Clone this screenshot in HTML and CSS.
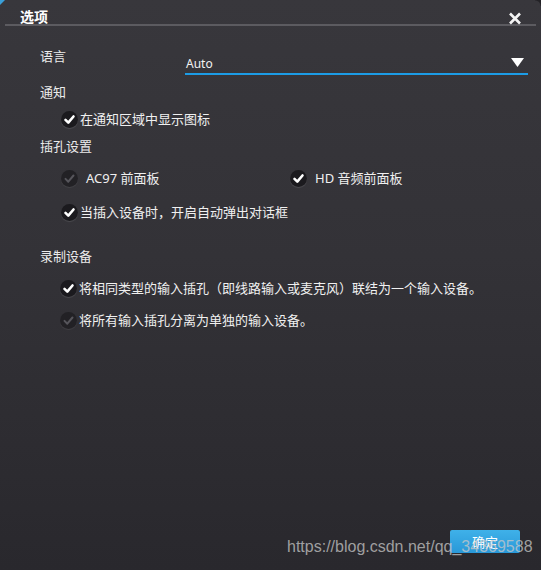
FILE: index.html
```html
<!DOCTYPE html>
<html lang="zh-CN">
<head>
<meta charset="utf-8">
<title>选项</title>
<link rel="stylesheet" href="styles.css">
</head>
<body>
<div class="dialog">
  <header class="titlebar">
    <span class="title">选项</span>
    <svg class="close" width="14" height="13" viewBox="0 0 14 13"><path d="M2 1.5 L12 11.5 M12 1.5 L2 11.5" stroke="#f4f4f4" stroke-width="2.6" fill="none"/></svg>
  </header>
  <main class="content">
    <div class="lang-row">
      <span class="label lang-label">语言</span>
      <div class="select">
        <span class="select-value">Auto</span>
        <svg class="caret" width="13" height="9" viewBox="0 0 13 9"><path d="M0 0 H13 L6.5 9 Z" fill="#ffffff"/></svg>
      </div>
    </div>

    <div class="label sec-notify">通知</div>
    <div class="opt opt-notify">
      <span class="chk on"><svg viewBox="0 0 17 17"><path d="M4.5 8.9 L7.3 11.7 L12.5 5.5"/></svg></span>
      <span class="opt-text">在通知区域中显示图标</span>
    </div>

    <div class="label sec-jack">插孔设置</div>
    <div class="jack-row">
      <div class="opt">
        <span class="chk off"><svg viewBox="0 0 17 17"><path d="M4.5 8.9 L7.3 11.7 L12.5 5.5"/></svg></span>
        <span class="opt-text spaced">AC97 前面板</span>
      </div>
      <div class="opt">
        <span class="chk on"><svg viewBox="0 0 17 17"><path d="M4.5 8.9 L7.3 11.7 L12.5 5.5"/></svg></span>
        <span class="opt-text spaced">HD 音频前面板</span>
      </div>
    </div>
    <div class="opt opt-popup">
      <span class="chk on"><svg viewBox="0 0 17 17"><path d="M4.5 8.9 L7.3 11.7 L12.5 5.5"/></svg></span>
      <span class="opt-text">当插入设备时，开启自动弹出对话框</span>
    </div>

    <div class="label sec-rec">录制设备</div>
    <div class="opt opt-rec1">
      <span class="chk on"><svg viewBox="0 0 17 17"><path d="M4.5 8.9 L7.3 11.7 L12.5 5.5"/></svg></span>
      <span class="opt-text">将相同类型的输入插孔（即线路输入或麦克风）联结为一个输入设备。</span>
    </div>
    <div class="opt opt-rec2">
      <span class="chk off"><svg viewBox="0 0 17 17"><path d="M4.5 8.9 L7.3 11.7 L12.5 5.5"/></svg></span>
      <span class="opt-text">将所有输入插孔分离为单独的输入设备。</span>
    </div>
  </main>
  <footer class="footer">
    <button class="ok">确定</button>
  </footer>
  <div class="watermark">https://blog.csdn.net/qq_34369588</div>
</div>
</body>
</html>
```

FILE: styles.css
```css
html, body {
  margin: 0;
  padding: 0;
  background: #2a292e;
}

.dialog {
  position: relative;
  width: 541px;
  height: 570px;
  display: flex;
  flex-direction: column;
  background: linear-gradient(to bottom, #38373c 0%, #333237 45%, #29282d 100%);
  font-family: "Noto Sans", "Noto Sans CJK SC", sans-serif;
  color: #ececec;
  overflow: hidden;
}

.dialog::before {
  content: "";
  position: absolute;
  left: 0;
  top: 0;
  width: 0;
  height: 0;
  border-top: 5px solid #3a9fd8;
  border-right: 5px solid transparent;
}

.dialog::after {
  content: "";
  position: absolute;
  right: 0;
  top: 0;
  width: 6px;
  height: 6px;
  background: radial-gradient(circle at 0 100%, transparent 5px, #232226 6px);
}

.titlebar {
  display: flex;
  justify-content: space-between;
  align-items: flex-start;
  height: 24px;
  margin: 0 5px;
  padding: 0 14px 0 15px;
  border-bottom: 2px solid #5c5b60;
  box-sizing: content-box;
}

.title {
  font-family: "Noto Sans CJK SC", sans-serif;
  font-size: 14px;
  font-weight: bold;
  line-height: 15px;
  padding-top: 9px;
  color: #ffffff;
}

.close {
  margin-top: 12px;
  display: block;
}

.content {
  flex: 1;
  padding-left: 40px;
}

.label {
  font-family: "Noto Sans CJK SC", sans-serif;
  font-size: 13px;
  line-height: 20px;
  color: #ebebeb;
}

.lang-row {
  display: flex;
  margin-top: 20px;
}

.lang-label {
  width: 145px;
}

.select {
  width: 342px;
  height: 27px;
  border-bottom: 2px solid #1c9ce6;
  display: flex;
  justify-content: space-between;
  align-items: flex-start;
  padding-left: 1px;
  box-sizing: content-box;
}

.select-value {
  font-family: "Noto Sans", sans-serif;
  font-size: 12px;
  line-height: 16px;
  padding-top: 10px;
  color: #f2f2f2;
}

.caret {
  display: block;
  margin-top: 12px;
  margin-right: 4px;
}

.sec-notify { margin-top: 7px; }
.sec-jack { margin-top: 5px; }
.sec-rec { margin-top: 22px; }

.opt {
  display: flex;
  align-items: center;
  height: 24px;
}

.content > .opt {
  margin-left: 21px;
}

.opt-notify { margin-top: 5px; }
.opt-popup { margin-top: 10px; }
.opt-rec1 { margin-top: 10px; }
.opt-rec2 { margin-top: 8px; }

.content > .opt-rec1,
.content > .opt-rec2 {
  margin-left: 20px;
}

.jack-row {
  display: grid;
  grid-template-columns: 229px 1fr;
  margin-top: 10px;
  margin-left: 21px;
}

.chk {
  width: 17px;
  height: 17px;
  border-radius: 50%;
  flex: none;
  display: block;
}

.chk svg {
  display: block;
  width: 17px;
  height: 17px;
}

.chk path {
  fill: none;
  stroke-width: 2.6;
  stroke-linecap: round;
  stroke-linejoin: round;
}

.chk.on {
  background: #1b1a1e;
  box-shadow: 0 1px 1px rgba(255, 255, 255, 0.12);
}

.chk.on path {
  stroke: #ffffff;
}

.chk.off {
  background: #222125;
  box-shadow: 0 1px 1px rgba(255, 255, 255, 0.08);
}

.chk.off path {
  stroke: #56555b;
  stroke-width: 2;
}

.opt-text {
  font-family: "Noto Sans CJK SC", sans-serif;
  font-size: 13px;
  line-height: 20px;
  color: #f0f0f0;
  margin-left: 2px;
  white-space: nowrap;
}

.opt-text.spaced {
  font-family: "Noto Sans", "Noto Sans CJK SC", sans-serif;
  margin-left: 8px;
}

.footer {
  display: flex;
  justify-content: flex-end;
  padding: 0 21px 17px 0;
}

.ok {
  width: 70px;
  height: 23px;
  border: none;
  border-radius: 2px;
  background: linear-gradient(to bottom, #3fb1e9, #2998d8);
  color: #ffffff;
  font-family: "Noto Sans CJK SC", sans-serif;
  font-size: 13px;
  line-height: 23px;
  padding: 0;
}

.watermark {
  position: absolute;
  left: 287px;
  top: 538px;
  font-family: "Liberation Sans", Arial, sans-serif;
  font-size: 16px;
  line-height: 18px;
  color: rgba(200, 200, 200, 0.75);
  white-space: nowrap;
}
```
